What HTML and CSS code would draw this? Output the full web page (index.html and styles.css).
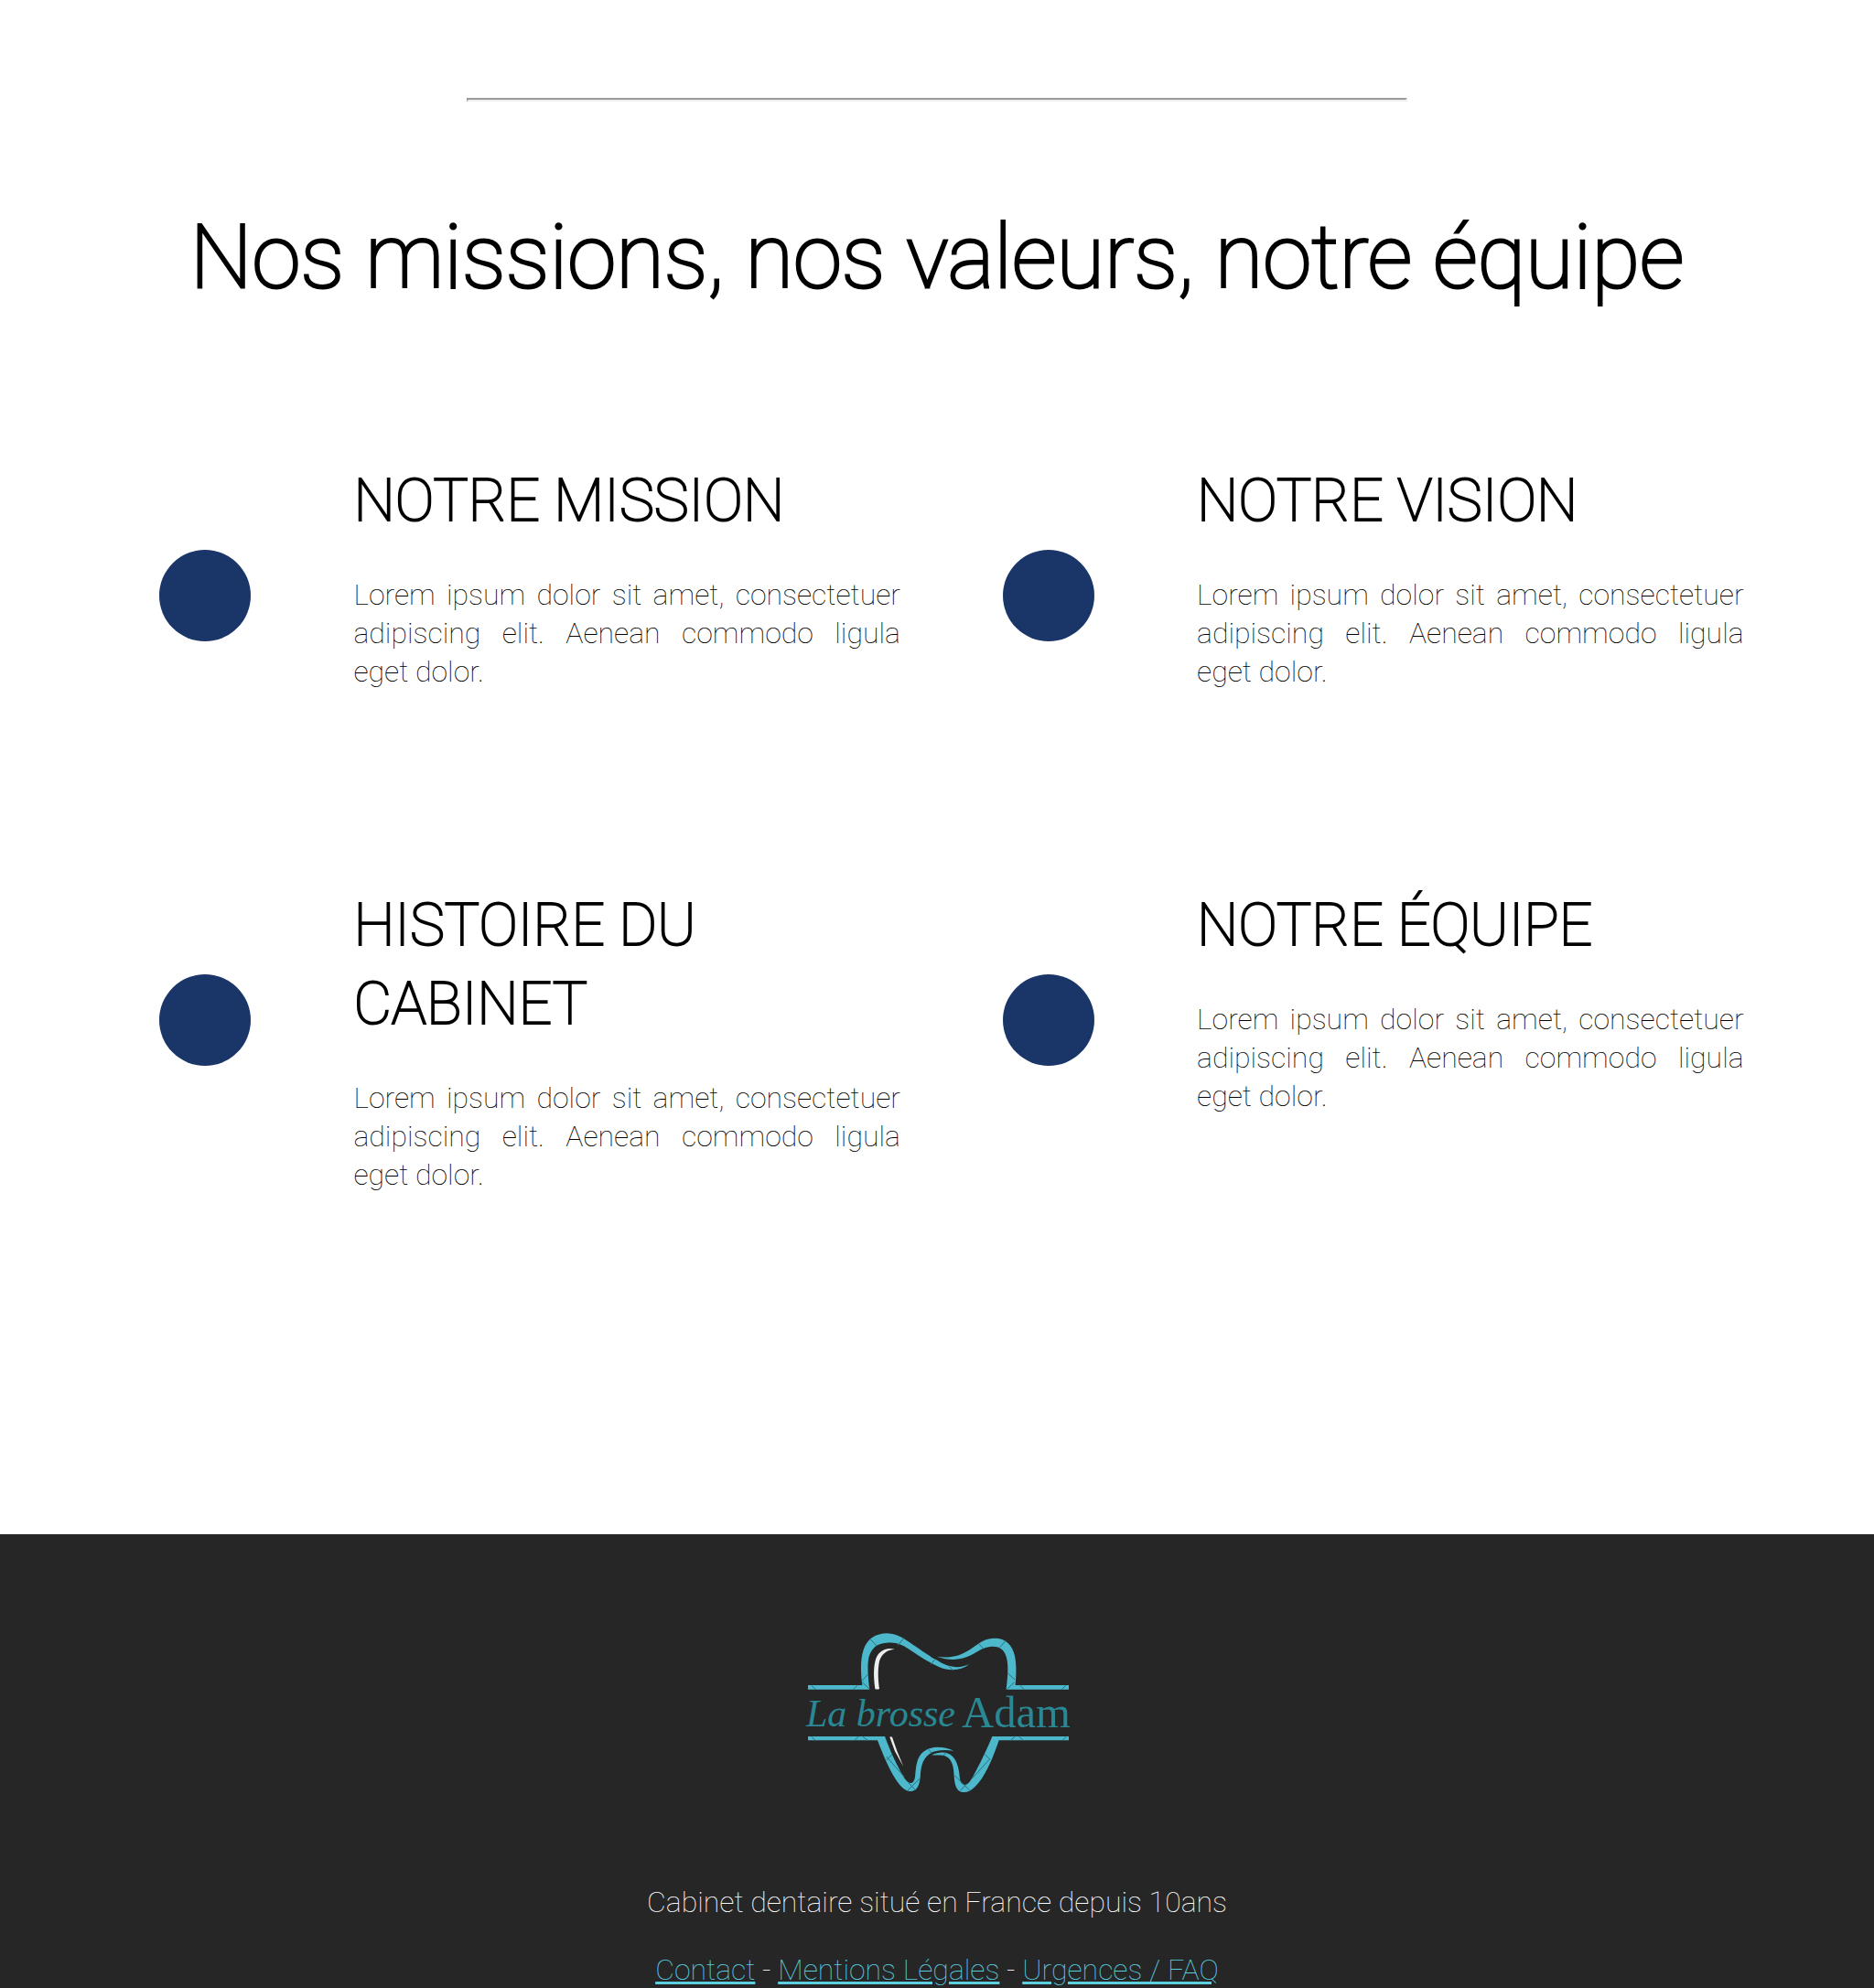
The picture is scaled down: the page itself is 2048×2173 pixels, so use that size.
FILE: index.html
```html
<!DOCTYPE html>
<html lang="fr">
<head>
  <meta charset="utf-8">
  <meta name="viewport" content="width=device-width, initial-scale=1">
  <title>La brosse Adam</title>
  <link rel="stylesheet" href="styles.css">
</head>
<body>
  <main class="about">
    <hr class="divider">
    <h1 class="about-title">Nos missions, nos valeurs, notre équipe</h1>
    <div class="features">
      <section class="feature">
        <div class="feature-icon"><span class="dot"></span></div>
        <div class="feature-body">
          <h2>NOTRE MISSION</h2>
          <p>Lorem ipsum dolor sit amet, consectetuer adipiscing elit. Aenean commodo ligula eget dolor.</p>
        </div>
      </section>
      <section class="feature">
        <div class="feature-icon"><span class="dot"></span></div>
        <div class="feature-body">
          <h2>NOTRE VISION</h2>
          <p>Lorem ipsum dolor sit amet, consectetuer adipiscing elit. Aenean commodo ligula eget dolor.</p>
        </div>
      </section>
      <section class="feature">
        <div class="feature-icon"><span class="dot"></span></div>
        <div class="feature-body">
          <h2>HISTOIRE DU CABINET</h2>
          <p>Lorem ipsum dolor sit amet, consectetuer adipiscing elit. Aenean commodo ligula eget dolor.</p>
        </div>
      </section>
      <section class="feature">
        <div class="feature-icon"><span class="dot"></span></div>
        <div class="feature-body">
          <h2>NOTRE ÉQUIPE</h2>
          <p>Lorem ipsum dolor sit amet, consectetuer adipiscing elit. Aenean commodo ligula eget dolor.</p>
        </div>
      </section>
    </div>
  </main>

  <footer class="footer">
    <svg class="logo" viewBox="-4 0 990 660" role="img" aria-label="La brosse Adam">
      <g class="logo-shape">
        <path d="M68 246H246C240 200 240 160 250 130C262 94 290 76 328 76C362 77 385 95 410 112C440 132 462 149 489 163C527 189 565 193 597 177C570 199 532 201 497 186C455 168 420 140 390 122C367 109 350 106 326 107C292 108 274 128 267 156C262 185 265 225 270 260H68Z"/>
        <path d="M490 152C548 160 574 146 607 124C634 104 652 92 680 92C717 92 738 114 746 150C752 180 751 215 748 246H923V260H718C722 225 726 190 720 160C714 132 700 118 670 119C642 121 625 135 602 148C565 166 530 165 490 152Z"/>
        <path d="M68 414H320C335 455 350 488 372 530C384 552 394 568 407 567C420 562 419 545 421 525C425 485 437 465 462 455C490 445 520 450 546 461C512 457 480 459 464 473C440 492 438 520 436 550C433 575 425 595 402 594C380 592 366 570 352 549C328 510 310 463 296 427H68Z"/>
        <path d="M923 414H672C657 450 640 488 617 530C605 553 595 574 580 573C566 570 566 552 564 535C560 505 551 482 530 471C512 464 494 466 474 475C490 477 505 473 520 479C542 489 546 516 547 545C549 575 556 598 580 597C603 597 622 575 638 552C663 514 680 468 694 427H923Z"/>
      </g>
      <g class="logo-shine">
        <path d="M288 258C283 220 282 184 291 158C300 134 325 120 352 128C325 130 308 146 302 168C296 195 298 230 302 258Q295 261 288 258Z"/>
        <path d="M336 416Q340 413 344 416L360 462L381 513L353 463Z"/>
      </g>
      <path class="logo-seams" d="M272 95L294 118M382 92L362 116M245 232L265 210M246 236L269 258M80 248L94 260M230 247L216 260M484 162L471 178M530 184L542 196M627 109L643 127M716 100L697 122M722 206L746 228M745 236L720 260M763 247L777 260M913 247L900 260M80 415L92 427M234 415L220 427M248 415L263 427M746 415L732 427M760 415L774 427M915 415L902 427M343 474L325 492M325 480L383 546M464 457L474 469M436 551L394 592M398 567L420 590M520 466L512 478M549 542L597 590M590 568L567 592M648 473L666 490M664 488L606 552"/>
      <text class="logo-script" x="62" y="381">La brosse</text>
      <text class="logo-name" x="572" y="383">Adam</text>
    </svg>
    <p>Cabinet dentaire situé en France depuis 10ans</p>
    <p><a href="#contact">Contact</a> - <a href="#mentions">Mentions Légales</a> - <a href="#faq">Urgences / FAQ</a></p>
  </footer>
</body>
</html>
```
FILE: styles.css
```css
* {
  box-sizing: border-box;
}

body {
  margin: 0;
  background: #fff;
  color: #000;
  font-family: Roboto, "Liberation Sans", sans-serif;
  font-size: 32px;
  font-weight: 100;
  line-height: 42px;
}

.about {
  padding: 107px 5% 246px;
}

.divider {
  box-sizing: content-box;
  width: 1024px;
  max-width: 100%;
  margin: 0 auto;
  border: 2px solid;
  border-color: #9a9a9a #eee #eee #9a9a9a;
}

/* Thin letterforms, thickened evenly for the headings */
.about-title {
  margin: 107px 0 0;
  font-size: 96px;
  font-weight: 100;
  line-height: 126px;
  text-align: center;
  -webkit-text-stroke: 3px #000;
}

.features {
  display: grid;
  grid-template-columns: 1fr 1fr;
  margin-top: 159px;
}

.feature {
  display: flex;
  gap: 80px;
  min-height: 464px;
  padding: 0 40px;
}

.feature-icon {
  display: flex;
  flex: 0 0 164px;
  justify-content: center;
  padding-top: 98px;
}

.dot {
  width: 100px;
  height: 100px;
  border-radius: 50%;
  background: #1a3568;
}

.feature-body {
  flex: 1;
  padding-top: 2px;
}

.feature h2 {
  margin: 0 0 38px;
  font-size: 64px;
  font-weight: 100;
  line-height: 86px;
  -webkit-text-stroke: 2px #000;
}

.feature p {
  margin: 0;
  text-align: justify;
}

.footer {
  display: flex;
  flex-direction: column;
  align-items: center;
  gap: 32px;
  padding: 83px 40px 40px;
  background: #262626;
  color: #fff;
  text-align: center;
}

.footer p {
  margin: 0;
}

.footer a {
  color: #5bcfe0;
}

.logo {
  width: 330px;
  height: 220px;
  margin-bottom: 46px;
}

.logo-shape {
  fill: #4db8cc;
}

.logo-shine {
  fill: #eee;
}

.logo-seams {
  fill: none;
  stroke: #28727f;
  stroke-width: 3;
}

.logo-script,
.logo-name {
  fill: #2a8794;
  font-family: "Liberation Serif", serif;
  font-weight: 400;
}

.logo-script {
  font-size: 126px;
  font-style: italic;
}

.logo-name {
  font-size: 146px;
}
```
